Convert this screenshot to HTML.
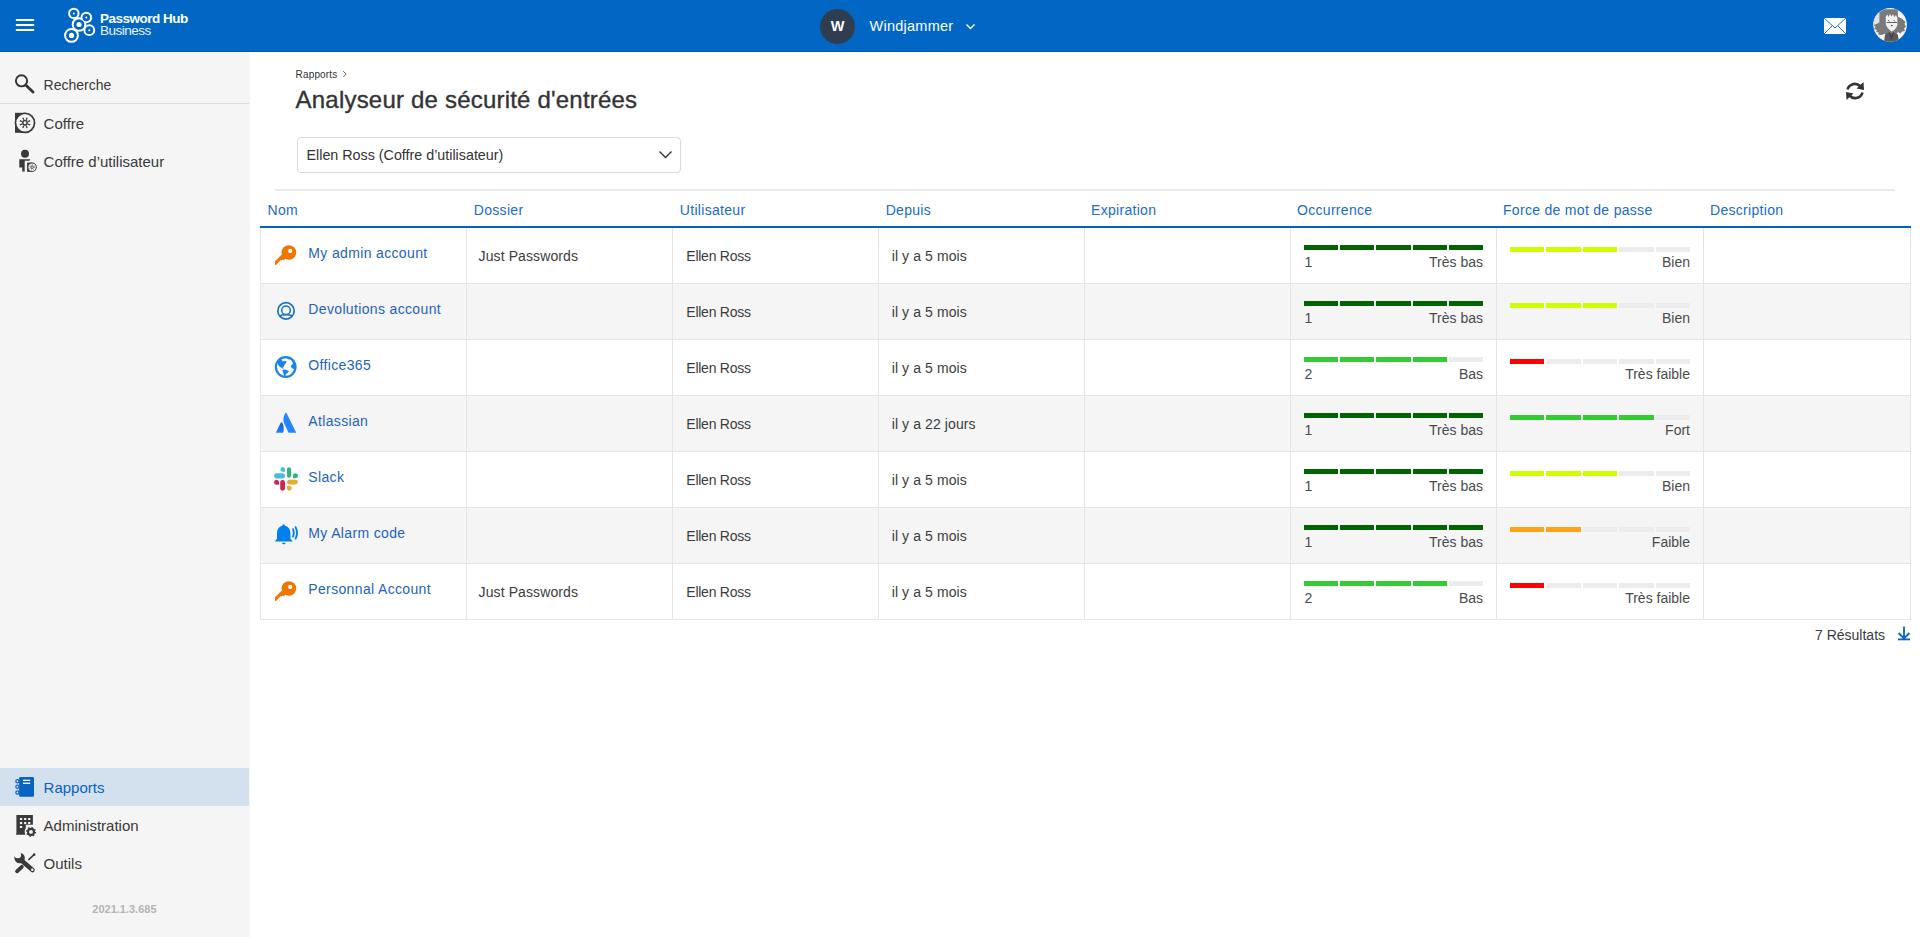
<!DOCTYPE html><html><head><meta charset="utf-8"><title>Analyseur de sécurité d'entrées</title><style>html,body{margin:0;padding:0;width:1920px;height:937px;overflow:hidden;background:#fff;font-family:"Liberation Sans",sans-serif;}body{position:relative;}</style></head><body>
<div style="position:absolute;left:0px;top:0px;width:1920px;height:52px;background:#0267c4;"></div>
<div style="position:absolute;left:0px;top:51px;width:1920px;height:1px;background:#005ab8;"></div>
<svg style="position:absolute;left:10px;top:14px" width="30" height="22" viewBox="0 0 30 22"><g stroke="#fff" stroke-width="2" stroke-linecap="round"><line x1="6.7" y1="6" x2="23.4" y2="6"/><line x1="6.7" y1="11" x2="23.4" y2="11"/><line x1="6.7" y1="16" x2="23.4" y2="16"/></g></svg>
<svg style="position:absolute;left:60px;top:0px" width="40" height="52" viewBox="0 0 40 52"><circle cx="13.849999999999994" cy="13.4" r="5.7" fill="#fff"/><circle cx="26.299999999999997" cy="17.5" r="5.8" fill="#fff"/><circle cx="19" cy="24.5" r="7.3" fill="#fff"/><circle cx="29.299999999999997" cy="30.2" r="5.9" fill="#fff"/><circle cx="11.5" cy="35.4" r="7.4" fill="#fff"/><circle cx="13.849999999999994" cy="13.4" r="3.7" fill="#0267c4"/><circle cx="26.299999999999997" cy="17.5" r="3.8" fill="#0267c4"/><circle cx="19" cy="24.5" r="5.3" fill="#0267c4"/><circle cx="29.299999999999997" cy="30.2" r="3.9000000000000004" fill="#0267c4"/><circle cx="11.5" cy="35.4" r="5.4" fill="#0267c4"/><circle cx="13.849999999999994" cy="13.4" r="1.0" fill="#fff"/><circle cx="26.299999999999997" cy="17.5" r="1.0" fill="#fff"/><circle cx="19" cy="24.5" r="2.6" fill="#fff"/><circle cx="29.299999999999997" cy="30.2" r="1.0" fill="#fff"/><circle cx="11.5" cy="35.4" r="2.6" fill="#fff"/></svg>
<div style="position:absolute;left:100.00px;top:11.97px;font-size:13.5px;line-height:13.5px;color:#fff;font-weight:700;white-space:nowrap;letter-spacing:-0.5px;">Password Hub</div>
<div style="position:absolute;left:100.00px;top:23.97px;font-size:13.5px;line-height:13.5px;color:#fff;font-weight:400;white-space:nowrap;letter-spacing:-0.5px;opacity:.92;">Business</div>
<div style="position:absolute;left:820px;top:9px;width:35px;height:35px;border-radius:50%;background:#2e3e50;"></div>
<div style="position:absolute;left:637.50px;width:400px;text-align:center;top:18.83px;font-size:14.5px;line-height:14.5px;color:#fff;font-weight:700;white-space:nowrap;">W</div>
<div style="position:absolute;left:869.50px;top:18.83px;font-size:14.5px;line-height:14.5px;color:#fff;font-weight:400;white-space:nowrap;letter-spacing:0.25px;">Windjammer</div>
<svg style="position:absolute;left:964px;top:21px" width="13" height="10" viewBox="0 0 13 10"><path d="M2.5 3.5 L6.5 7.5 L10.5 3.5" stroke="#fff" stroke-width="1.4" fill="none"/></svg>
<svg style="position:absolute;left:1824px;top:18px" width="22" height="16" viewBox="0 0 22 16"><rect x="0" y="0" width="22" height="16" fill="#fff" shape-rendering="crispEdges"/><path d="M0 0 L11 10 L22 0 M0 16 L8 8 M22 16 L14 8" stroke="#0267c4" stroke-width="0.9" fill="none"/></svg>
<svg style="position:absolute;left:1873px;top:8px" width="34" height="34" viewBox="0 0 34 34"><defs><clipPath id="av"><circle cx="17.1" cy="16.9" r="16.8"/></clipPath></defs>
<g clip-path="url(#av)"><rect width="34" height="34" fill="#f5f5f5"/><rect x="0" y="0" width="9" height="18" fill="#e2e2e2"/>
<path d="M10.7 1.3 L24.8 1.3 L25 9 C27 9.5 30 11 32.5 14 L31.5 16 L33 18.5 L31 20.5 L32 23 L29 23.5 L27.5 25.5 L25 24 L23.5 26 L11 26 C9 27 6.5 27.5 5 26 L6 24.5 L3 24 L4 22 L1 21 L2.5 19 L0.8 17 L4.5 15.5 L6.4 14.5 L6.4 4 Z" fill="#7a7a7a"/>
<path d="M12.8 8.5 L14.5 6.5 L15.5 9 L17 6 L18.5 8.5 L20 6.2 L21.5 9 L23 7 L24.4 10 L24.4 17 C23.5 20 21 23 18.4 23.5 C16 22 13.5 19 12.8 16 Z" fill="#f2f2f2"/>
<path d="M13.5 14.5 L24 14.5 M15 12 L16.5 13.5 M20.5 12 L22 13.5" stroke="#555" stroke-width="0.9" fill="none"/>
<ellipse cx="18.8" cy="17.6" rx="1" ry="0.6" fill="#333"/>
<path d="M11 34 L12 26.5 L16 24.5 L18.4 25.5 L21 24.5 L24.8 26.5 L26 34 Z" fill="#5a5a5a"/>
<path d="M16.5 24.5 L18.4 31 L20.5 24.5" stroke="#333" stroke-width="0.8" fill="none"/>
</g></svg>
<div style="position:absolute;left:0px;top:52px;width:250px;height:885px;background:#f5f5f5;"></div>
<div style="position:absolute;left:0px;top:103px;width:249px;height:1px;background:#dcdcdc;"></div>
<svg style="position:absolute;left:12px;top:71px" width="26" height="26" viewBox="0 0 26 26"><circle cx="9.5" cy="9.8" r="5.6" stroke="#333" stroke-width="1.9" fill="none"/><path d="M14.2 14.5 L21 21" stroke="#333" stroke-width="2.8" stroke-linecap="round"/></svg>
<div style="position:absolute;left:43.60px;top:77.95px;font-size:14px;line-height:14px;color:#3a3a3a;font-weight:400;white-space:nowrap;">Recherche</div>
<svg style="position:absolute;left:12px;top:110px" width="26" height="26" viewBox="0 0 26 26"><rect x="3" y="2.8" width="10" height="20" fill="#3a3a3a"/><circle cx="13" cy="12.8" r="10.4" fill="#3a3a3a"/><circle cx="13" cy="12.8" r="8.7" fill="#f5f5f5"/><circle cx="13" cy="12.8" r="2.2" stroke="#3a3a3a" stroke-width="1.5" fill="none"/><g stroke="#3a3a3a" stroke-width="1.3"><line x1="16.05" y1="14.06" x2="18.17" y2="14.94"/><line x1="14.26" y1="15.85" x2="15.14" y2="17.97"/><line x1="11.74" y1="15.85" x2="10.86" y2="17.97"/><line x1="9.95" y1="14.06" x2="7.83" y2="14.94"/><line x1="9.95" y1="11.54" x2="7.83" y2="10.66"/><line x1="11.74" y1="9.75" x2="10.86" y2="7.63"/><line x1="14.26" y1="9.75" x2="15.14" y2="7.63"/><line x1="16.05" y1="11.54" x2="18.17" y2="10.66"/></g></svg>
<div style="position:absolute;left:43.60px;top:116.05px;font-size:15px;line-height:15px;color:#3a3a3a;font-weight:400;white-space:nowrap;">Coffre</div>
<svg style="position:absolute;left:12px;top:146px" width="28" height="28" viewBox="0 0 28 28"><circle cx="13" cy="7.7" r="4" fill="#3a3a3a"/><path d="M7.3 13.2 L18.2 13.2 L17.6 14.8 L12.7 14.8 L12.7 25.6 L10.2 25.6 L10.2 21.5 L7.3 21.5 Z" fill="#3a3a3a"/><rect x="15.1" y="16.6" width="5" height="9.2" fill="#3a3a3a"/><circle cx="20.1" cy="21.2" r="4.7" fill="#3a3a3a"/><circle cx="20.1" cy="21.2" r="3.7" fill="#f5f5f5"/><circle cx="20.1" cy="21.2" r="1.3" stroke="#3a3a3a" stroke-width="0.9" fill="none"/><circle cx="20.1" cy="21.2" r="2.5" stroke="#3a3a3a" stroke-width="0.7" stroke-dasharray="0.7 1.26" fill="none"/></svg>
<div style="position:absolute;left:43.60px;top:154.30px;font-size:15px;line-height:15px;color:#3a3a3a;font-weight:400;white-space:nowrap;">Coffre d’utilisateur</div>
<div style="position:absolute;left:0px;top:768px;width:249px;height:38px;background:#d3e0ee;"></div>
<svg style="position:absolute;left:12px;top:772px" width="26" height="28" viewBox="0 0 26 28"><rect x="7.1" y="5" width="14.9" height="19.8" rx="1.2" fill="#0a62c2"/><rect x="11" y="7.7" width="7.2" height="1.3" fill="#fff"/><rect x="11" y="10.6" width="7.2" height="1.3" fill="#fff"/><g stroke="#0a62c2" stroke-width="1.2" fill="none"><circle cx="5.4" cy="9.3" r="1.6"/><circle cx="5.4" cy="14.7" r="1.6"/><circle cx="5.4" cy="20.5" r="1.6"/></g></svg>
<div style="position:absolute;left:43.60px;top:780.10px;font-size:15px;line-height:15px;color:#0a62c2;font-weight:400;white-space:nowrap;">Rapports</div>
<svg style="position:absolute;left:12px;top:810px" width="28" height="28" viewBox="0 0 28 28"><path d="M4.4 5 L20.9 5 L20.9 14.7 L13.8 14.7 L13.8 24.7 L4.1 24.7 L4.1 23.5 L4.4 23.5 Z" fill="#3a3a3a"/><g fill="#f5f5f5"><rect x="7.9" y="8" width="2.3" height="2"/><rect x="12.1" y="8" width="2.2" height="2"/><rect x="16.1" y="8" width="2.2" height="2"/><rect x="7.9" y="12" width="2.3" height="2.1"/><rect x="12.1" y="12" width="2.2" height="2.1"/><rect x="16.1" y="12" width="2.2" height="2.1"/><rect x="7.9" y="16" width="2.3" height="2"/><circle cx="19" cy="21.9" r="6.3"/></g><circle cx="19" cy="21.9" r="3" stroke="#3a3a3a" stroke-width="2.1" fill="none"/><circle cx="19" cy="21.9" r="4.4" stroke="#3a3a3a" stroke-width="1.4" stroke-dasharray="1.4 2.05" fill="none"/></svg>
<div style="position:absolute;left:43.60px;top:818.30px;font-size:15px;line-height:15px;color:#3a3a3a;font-weight:400;white-space:nowrap;">Administration</div>
<svg style="position:absolute;left:12px;top:848px" width="28" height="28" viewBox="0 0 28 28"><path d="M5 23.3 L9.8 18.8" stroke="#3a3a3a" stroke-width="3.8" stroke-linecap="round"/><path d="M16.8 11.6 L21.8 6.9" stroke="#3a3a3a" stroke-width="1.5" stroke-linecap="round"/><circle cx="22.2" cy="6.6" r="1.3" fill="#3a3a3a"/><path d="M9.5 12.5 L20.5 22" stroke="#3a3a3a" stroke-width="4.6" stroke-linecap="round"/><circle cx="7.6" cy="10" r="5.2" fill="#3a3a3a"/><circle cx="5.8" cy="7" r="3.3" fill="#f5f5f5"/><path d="M2.8 4.5 L8.5 4 L4 9.5 Z" fill="#f5f5f5"/><circle cx="20.3" cy="21.8" r="1.3" fill="#f5f5f5"/></svg>
<div style="position:absolute;left:43.60px;top:856.00px;font-size:15px;line-height:15px;color:#3a3a3a;font-weight:400;white-space:nowrap;">Outils</div>
<div style="position:absolute;left:-75.60px;width:400px;text-align:center;top:904.44px;font-size:11px;line-height:11px;color:#b4b4b4;font-weight:700;white-space:nowrap;">2021.1.3.685</div>
<div style="position:absolute;left:295.60px;top:70.44px;font-size:10px;line-height:10px;color:#333;font-weight:400;white-space:nowrap;letter-spacing:0.15px;">Rapports</div>
<svg style="position:absolute;left:341px;top:70px" width="7" height="9" viewBox="0 0 7 9"><path d="M2.3 1.2 L5.2 4.1 L2.3 7" stroke="#444" stroke-width="0.9" fill="none"/></svg>
<div style="position:absolute;left:295.60px;top:87.98px;font-size:24px;line-height:24px;color:#333;font-weight:400;white-space:nowrap;letter-spacing:0.2px;-webkit-text-stroke:0.35px #333;">Analyseur de sécurité d'entrées</div>
<svg style="position:absolute;left:1844px;top:80px" width="22" height="22" viewBox="0 0 22 22"><path d="M3.5 9.5 A7.5 7.5 0 0 1 16 6" stroke="#333" stroke-width="2.6" fill="none"/><path d="M19.5 2 L20 10 L12.5 8.5 Z" fill="#333"/><path d="M18.5 12.5 A7.5 7.5 0 0 1 6 16" stroke="#333" stroke-width="2.6" fill="none"/><path d="M2.5 20 L2 12 L9.5 13.5 Z" fill="#333"/></svg>
<div style="position:absolute;left:297px;top:137px;width:382px;height:34px;border:1px solid #d9d9d9;border-radius:4px;background:#fff;"></div>
<div style="position:absolute;left:306.50px;top:148.30px;font-size:14.3px;line-height:14.3px;color:#333;font-weight:400;white-space:nowrap;">Ellen Ross (Coffre d’utilisateur)</div>
<svg style="position:absolute;left:656px;top:147px" width="18" height="14" viewBox="0 0 18 14"><path d="M3.5 4.6 L9.5 10.6 L15.5 4.6" stroke="#333" stroke-width="1.35" fill="none"/></svg>
<div style="position:absolute;left:275px;top:189px;width:1620px;height:2px;background:#ebebeb;"></div>
<div style="position:absolute;left:267.60px;top:203.15px;font-size:14px;line-height:14px;color:#1a6bc6;font-weight:400;white-space:nowrap;letter-spacing:0.3px;">Nom</div>
<div style="position:absolute;left:473.80px;top:203.15px;font-size:14px;line-height:14px;color:#1a6bc6;font-weight:400;white-space:nowrap;letter-spacing:0.3px;">Dossier</div>
<div style="position:absolute;left:679.80px;top:203.15px;font-size:14px;line-height:14px;color:#1a6bc6;font-weight:400;white-space:nowrap;letter-spacing:0.3px;">Utilisateur</div>
<div style="position:absolute;left:885.70px;top:203.15px;font-size:14px;line-height:14px;color:#1a6bc6;font-weight:400;white-space:nowrap;letter-spacing:0.3px;">Depuis</div>
<div style="position:absolute;left:1091.00px;top:203.15px;font-size:14px;line-height:14px;color:#1a6bc6;font-weight:400;white-space:nowrap;letter-spacing:0.3px;">Expiration</div>
<div style="position:absolute;left:1297.00px;top:203.15px;font-size:14px;line-height:14px;color:#1a6bc6;font-weight:400;white-space:nowrap;letter-spacing:0.3px;">Occurrence</div>
<div style="position:absolute;left:1503.00px;top:203.15px;font-size:14px;line-height:14px;color:#1a6bc6;font-weight:400;white-space:nowrap;letter-spacing:0.3px;">Force de mot de passe</div>
<div style="position:absolute;left:1710.00px;top:203.15px;font-size:14px;line-height:14px;color:#1a6bc6;font-weight:400;white-space:nowrap;letter-spacing:0.3px;">Description</div>
<div style="position:absolute;left:260px;top:226px;width:1651px;height:2px;background:#0061c2;"></div>
<div style="position:absolute;left:260px;top:228px;width:1651px;height:55px;background:#ffffff;"></div>
<div style="position:absolute;left:260px;top:283px;width:1651px;height:1px;background:#e5e5e5;"></div>
<svg style="position:absolute;left:270px;top:240px" width="30" height="30" viewBox="0 0 30 30"><circle cx="18.9" cy="12.5" r="7.3" fill="#ee7700"/><path d="M12.8 13.5 L17 17.8 L13.5 20.2 L12.5 19.6 L11.6 20.6 L10.6 20 L7.2 23.8 L6 25 L5 24.9 L4.9 21.5 Z" fill="#ee7700"/><circle cx="20.2" cy="10.9" r="2.1" fill="#ffffff"/></svg>
<div style="position:absolute;left:308.30px;top:246.15px;font-size:14px;line-height:14px;color:#1f63bb;font-weight:400;white-space:nowrap;letter-spacing:0.35px;">My admin account</div>
<div style="position:absolute;left:478.60px;top:248.75px;font-size:14px;line-height:14px;color:#3c3c3c;font-weight:400;white-space:nowrap;letter-spacing:0.1px;">Just Passwords</div>
<div style="position:absolute;left:686.30px;top:248.75px;font-size:14px;line-height:14px;color:#3c3c3c;font-weight:400;white-space:nowrap;letter-spacing:-0.25px;">Ellen Ross</div>
<div style="position:absolute;left:891.70px;top:248.75px;font-size:14px;line-height:14px;color:#3c3c3c;font-weight:400;white-space:nowrap;letter-spacing:0.1px;">il y a 5 mois</div>
<div style="position:absolute;left:1304px;top:245px;width:34px;height:5px;background:#006400;"></div>
<div style="position:absolute;left:1340px;top:245px;width:34px;height:5px;background:#006400;"></div>
<div style="position:absolute;left:1376px;top:245px;width:35px;height:5px;background:#006400;"></div>
<div style="position:absolute;left:1413px;top:245px;width:34px;height:5px;background:#006400;"></div>
<div style="position:absolute;left:1449px;top:245px;width:34px;height:5px;background:#006400;"></div>
<div style="position:absolute;left:1304.50px;top:255.15px;font-size:14px;line-height:14px;color:#4a4a4a;font-weight:400;white-space:nowrap;">1</div>
<div style="position:absolute;right:437.00px;top:255.15px;font-size:14px;line-height:14px;color:#4a4a4a;font-weight:400;white-space:nowrap;">Très bas</div>
<div style="position:absolute;left:1510px;top:247px;width:34px;height:5px;background:#ccff00;"></div>
<div style="position:absolute;left:1546px;top:247px;width:35px;height:5px;background:#ccff00;"></div>
<div style="position:absolute;left:1583px;top:247px;width:34px;height:5px;background:#ccff00;"></div>
<div style="position:absolute;left:1619px;top:247px;width:35px;height:5px;background:#ececec;"></div>
<div style="position:absolute;left:1656px;top:247px;width:34px;height:5px;background:#ececec;"></div>
<div style="position:absolute;right:230.00px;top:255.15px;font-size:14px;line-height:14px;color:#4a4a4a;font-weight:400;white-space:nowrap;">Bien</div>
<div style="position:absolute;left:260px;top:284px;width:1651px;height:55px;background:#f5f5f5;"></div>
<div style="position:absolute;left:260px;top:339px;width:1651px;height:1px;background:#e5e5e5;"></div>
<svg style="position:absolute;left:270px;top:296px" width="30" height="30" viewBox="0 0 30 30"><circle cx="16" cy="14.9" r="8.2" stroke="#1a73c8" stroke-width="1.7" fill="none"/><circle cx="16" cy="14.2" r="4.3" stroke="#1a73c8" stroke-width="1.5" fill="none"/><path d="M9.6 20 C12 18.3 20 18.3 22.4 20" stroke="#1a73c8" stroke-width="1.6" fill="none"/></svg>
<div style="position:absolute;left:308.30px;top:302.15px;font-size:14px;line-height:14px;color:#1f63bb;font-weight:400;white-space:nowrap;letter-spacing:0.35px;">Devolutions account</div>
<div style="position:absolute;left:686.30px;top:304.75px;font-size:14px;line-height:14px;color:#3c3c3c;font-weight:400;white-space:nowrap;letter-spacing:-0.25px;">Ellen Ross</div>
<div style="position:absolute;left:891.70px;top:304.75px;font-size:14px;line-height:14px;color:#3c3c3c;font-weight:400;white-space:nowrap;letter-spacing:0.1px;">il y a 5 mois</div>
<div style="position:absolute;left:1304px;top:301px;width:34px;height:5px;background:#006400;"></div>
<div style="position:absolute;left:1340px;top:301px;width:34px;height:5px;background:#006400;"></div>
<div style="position:absolute;left:1376px;top:301px;width:35px;height:5px;background:#006400;"></div>
<div style="position:absolute;left:1413px;top:301px;width:34px;height:5px;background:#006400;"></div>
<div style="position:absolute;left:1449px;top:301px;width:34px;height:5px;background:#006400;"></div>
<div style="position:absolute;left:1304.50px;top:311.15px;font-size:14px;line-height:14px;color:#4a4a4a;font-weight:400;white-space:nowrap;">1</div>
<div style="position:absolute;right:437.00px;top:311.15px;font-size:14px;line-height:14px;color:#4a4a4a;font-weight:400;white-space:nowrap;">Très bas</div>
<div style="position:absolute;left:1510px;top:303px;width:34px;height:5px;background:#ccff00;"></div>
<div style="position:absolute;left:1546px;top:303px;width:35px;height:5px;background:#ccff00;"></div>
<div style="position:absolute;left:1583px;top:303px;width:34px;height:5px;background:#ccff00;"></div>
<div style="position:absolute;left:1619px;top:303px;width:35px;height:5px;background:#ececec;"></div>
<div style="position:absolute;left:1656px;top:303px;width:34px;height:5px;background:#ececec;"></div>
<div style="position:absolute;right:230.00px;top:311.15px;font-size:14px;line-height:14px;color:#4a4a4a;font-weight:400;white-space:nowrap;">Bien</div>
<div style="position:absolute;left:260px;top:340px;width:1651px;height:55px;background:#ffffff;"></div>
<div style="position:absolute;left:260px;top:395px;width:1651px;height:1px;background:#e5e5e5;"></div>
<svg style="position:absolute;left:270px;top:352px" width="30" height="30" viewBox="0 0 30 30"><circle cx="15.7" cy="15" r="9.8" stroke="#1a84ea" stroke-width="2.2" fill="#ffffff"/><path d="M7.5 10.5 L8.5 8 L11 6.8 L12.5 8.8 L12 9.6 L14.5 9 L16.8 9.5 L15.5 11.5 L14.2 13.5 L13.5 15.3 L12 15.5 L14.5 16.2 L12.5 16.5 L10.5 15.2 L8.5 13.5 L7.8 11.5 Z" fill="#1a84ea"/><path d="M12.8 17.8 L15.5 17.6 L19 19.2 L17.5 21 L16.2 22 L15 24.5 L14 24.5 L13.6 21.5 L12.6 19.5 Z" fill="#1a84ea"/><path d="M16.5 5.8 L18.5 7.5 L20.2 7 L22.5 9.5 L23 11.5 L21 13.5 L21.3 15.5 L23.5 17 L25.8 18.5 L25.5 12 L24 8 L20 5.5 Z" fill="#1a84ea"/></svg>
<div style="position:absolute;left:308.30px;top:358.15px;font-size:14px;line-height:14px;color:#1f63bb;font-weight:400;white-space:nowrap;letter-spacing:0.35px;">Office365</div>
<div style="position:absolute;left:686.30px;top:360.75px;font-size:14px;line-height:14px;color:#3c3c3c;font-weight:400;white-space:nowrap;letter-spacing:-0.25px;">Ellen Ross</div>
<div style="position:absolute;left:891.70px;top:360.75px;font-size:14px;line-height:14px;color:#3c3c3c;font-weight:400;white-space:nowrap;letter-spacing:0.1px;">il y a 5 mois</div>
<div style="position:absolute;left:1304px;top:357px;width:34px;height:5px;background:#33cc33;"></div>
<div style="position:absolute;left:1340px;top:357px;width:34px;height:5px;background:#33cc33;"></div>
<div style="position:absolute;left:1376px;top:357px;width:35px;height:5px;background:#33cc33;"></div>
<div style="position:absolute;left:1413px;top:357px;width:34px;height:5px;background:#33cc33;"></div>
<div style="position:absolute;left:1449px;top:357px;width:34px;height:5px;background:#ececec;"></div>
<div style="position:absolute;left:1304.50px;top:367.15px;font-size:14px;line-height:14px;color:#4a4a4a;font-weight:400;white-space:nowrap;">2</div>
<div style="position:absolute;right:437.00px;top:367.15px;font-size:14px;line-height:14px;color:#4a4a4a;font-weight:400;white-space:nowrap;">Bas</div>
<div style="position:absolute;left:1510px;top:359px;width:34px;height:5px;background:#ff0000;"></div>
<div style="position:absolute;left:1546px;top:359px;width:35px;height:5px;background:#ececec;"></div>
<div style="position:absolute;left:1583px;top:359px;width:34px;height:5px;background:#ececec;"></div>
<div style="position:absolute;left:1619px;top:359px;width:35px;height:5px;background:#ececec;"></div>
<div style="position:absolute;left:1656px;top:359px;width:34px;height:5px;background:#ececec;"></div>
<div style="position:absolute;right:230.00px;top:367.15px;font-size:14px;line-height:14px;color:#4a4a4a;font-weight:400;white-space:nowrap;">Très faible</div>
<div style="position:absolute;left:260px;top:396px;width:1651px;height:55px;background:#f5f5f5;"></div>
<div style="position:absolute;left:260px;top:451px;width:1651px;height:1px;background:#e5e5e5;"></div>
<svg style="position:absolute;left:270px;top:408px" width="30" height="30" viewBox="0 0 30 30"><defs><linearGradient id="ag" x1="0.6" y1="0" x2="0.2" y2="1"><stop offset="0" stop-color="#0a5fd6"/><stop offset="1" stop-color="#2684ff"/></linearGradient></defs><path d="M5.8 24.7 L10.7 14.7 C11 14 11.8 14 12.2 14.7 C13.2 16.5 14.2 19.8 13.6 22.5 L13 24.7 Z" fill="url(#ag)"/><path d="M15.2 5.3 C15.5 4.6 16.3 4.6 16.6 5.3 L26.3 24.7 L18.6 24.7 L13.9 14.8 C12.9 11.8 13.3 8.5 15.2 5.3 Z" fill="#2684ff"/></svg>
<div style="position:absolute;left:308.30px;top:414.15px;font-size:14px;line-height:14px;color:#1f63bb;font-weight:400;white-space:nowrap;letter-spacing:0.35px;">Atlassian</div>
<div style="position:absolute;left:686.30px;top:416.75px;font-size:14px;line-height:14px;color:#3c3c3c;font-weight:400;white-space:nowrap;letter-spacing:-0.25px;">Ellen Ross</div>
<div style="position:absolute;left:891.70px;top:416.75px;font-size:14px;line-height:14px;color:#3c3c3c;font-weight:400;white-space:nowrap;letter-spacing:0.1px;">il y a 22 jours</div>
<div style="position:absolute;left:1304px;top:413px;width:34px;height:5px;background:#006400;"></div>
<div style="position:absolute;left:1340px;top:413px;width:34px;height:5px;background:#006400;"></div>
<div style="position:absolute;left:1376px;top:413px;width:35px;height:5px;background:#006400;"></div>
<div style="position:absolute;left:1413px;top:413px;width:34px;height:5px;background:#006400;"></div>
<div style="position:absolute;left:1449px;top:413px;width:34px;height:5px;background:#006400;"></div>
<div style="position:absolute;left:1304.50px;top:423.15px;font-size:14px;line-height:14px;color:#4a4a4a;font-weight:400;white-space:nowrap;">1</div>
<div style="position:absolute;right:437.00px;top:423.15px;font-size:14px;line-height:14px;color:#4a4a4a;font-weight:400;white-space:nowrap;">Très bas</div>
<div style="position:absolute;left:1510px;top:415px;width:34px;height:5px;background:#33cc33;"></div>
<div style="position:absolute;left:1546px;top:415px;width:35px;height:5px;background:#33cc33;"></div>
<div style="position:absolute;left:1583px;top:415px;width:34px;height:5px;background:#33cc33;"></div>
<div style="position:absolute;left:1619px;top:415px;width:35px;height:5px;background:#33cc33;"></div>
<div style="position:absolute;left:1656px;top:415px;width:34px;height:5px;background:#ececec;"></div>
<div style="position:absolute;right:230.00px;top:423.15px;font-size:14px;line-height:14px;color:#4a4a4a;font-weight:400;white-space:nowrap;">Fort</div>
<div style="position:absolute;left:260px;top:452px;width:1651px;height:55px;background:#ffffff;"></div>
<div style="position:absolute;left:260px;top:507px;width:1651px;height:1px;background:#e5e5e5;"></div>
<svg style="position:absolute;left:270px;top:464px" width="30" height="30" viewBox="0 0 30 30"><g stroke-linecap="round"><path d="M6.7 11.85 L12.5 11.85" stroke="#44bde0" stroke-width="5.1"/><path d="M19.05 5.3 L19.05 11.7" stroke="#2eb67d" stroke-width="4.1"/><path d="M19.4 18.1 L25.5 18.1" stroke="#e3ad36" stroke-width="4.8"/><path d="M12.6 18.4 L12.6 24.3" stroke="#d2224f" stroke-width="4.8"/></g><path d="M12.8 3 A2.4 2.4 0 0 0 12.8 7.8 L15 7.8 L15 5.2 A2.4 2.4 0 0 0 12.8 3 Z" fill="#44bde0"/><path d="M25.5 9.2 A2.5 2.5 0 0 1 25.5 14.2 L23 14.2 L23 11.7 A2.5 2.5 0 0 1 25.5 9.2 Z" fill="#2eb67d"/><path d="M6.6 15.8 A2.5 2.5 0 0 0 6.6 20.8 L9 20.8 L9 18.3 A2.5 2.5 0 0 0 6.6 15.8 Z" fill="#d2224f"/><path d="M17 21.8 L19 21.8 A2.5 2.5 0 0 1 19 26.8 A2.5 2.5 0 0 1 17 24.3 Z" fill="#e3ad36"/></svg>
<div style="position:absolute;left:308.30px;top:470.15px;font-size:14px;line-height:14px;color:#1f63bb;font-weight:400;white-space:nowrap;letter-spacing:0.35px;">Slack</div>
<div style="position:absolute;left:686.30px;top:472.75px;font-size:14px;line-height:14px;color:#3c3c3c;font-weight:400;white-space:nowrap;letter-spacing:-0.25px;">Ellen Ross</div>
<div style="position:absolute;left:891.70px;top:472.75px;font-size:14px;line-height:14px;color:#3c3c3c;font-weight:400;white-space:nowrap;letter-spacing:0.1px;">il y a 5 mois</div>
<div style="position:absolute;left:1304px;top:469px;width:34px;height:5px;background:#006400;"></div>
<div style="position:absolute;left:1340px;top:469px;width:34px;height:5px;background:#006400;"></div>
<div style="position:absolute;left:1376px;top:469px;width:35px;height:5px;background:#006400;"></div>
<div style="position:absolute;left:1413px;top:469px;width:34px;height:5px;background:#006400;"></div>
<div style="position:absolute;left:1449px;top:469px;width:34px;height:5px;background:#006400;"></div>
<div style="position:absolute;left:1304.50px;top:479.15px;font-size:14px;line-height:14px;color:#4a4a4a;font-weight:400;white-space:nowrap;">1</div>
<div style="position:absolute;right:437.00px;top:479.15px;font-size:14px;line-height:14px;color:#4a4a4a;font-weight:400;white-space:nowrap;">Très bas</div>
<div style="position:absolute;left:1510px;top:471px;width:34px;height:5px;background:#ccff00;"></div>
<div style="position:absolute;left:1546px;top:471px;width:35px;height:5px;background:#ccff00;"></div>
<div style="position:absolute;left:1583px;top:471px;width:34px;height:5px;background:#ccff00;"></div>
<div style="position:absolute;left:1619px;top:471px;width:35px;height:5px;background:#ececec;"></div>
<div style="position:absolute;left:1656px;top:471px;width:34px;height:5px;background:#ececec;"></div>
<div style="position:absolute;right:230.00px;top:479.15px;font-size:14px;line-height:14px;color:#4a4a4a;font-weight:400;white-space:nowrap;">Bien</div>
<div style="position:absolute;left:260px;top:508px;width:1651px;height:55px;background:#f5f5f5;"></div>
<div style="position:absolute;left:260px;top:563px;width:1651px;height:1px;background:#e5e5e5;"></div>
<svg style="position:absolute;left:270px;top:520px" width="30" height="30" viewBox="0 0 30 30"><path d="M13.7 4.2 C14.4 4.2 14.8 5 15.2 5.8 C18.6 6.8 20.4 9.5 20.4 13 L20.5 18.8 L22.9 21.6 L4.8 21.6 L7 18.8 L7 13 C7 9.5 8.8 6.8 12.2 5.8 C12.6 5 13 4.2 13.7 4.2 Z" fill="#0080ee"/><path d="M11.9 22.8 L15.7 22.8 C15.2 24.8 12.4 24.8 11.9 22.8 Z" fill="#0080ee"/><path d="M23.1 9.2 C24 11.5 24 14.5 23.1 16.6" stroke="#0080ee" stroke-width="1.9" fill="none" stroke-linecap="round"/><path d="M25.6 7.2 C27.2 10.5 27.2 15.5 25.6 18.6" stroke="#0080ee" stroke-width="1.9" fill="none" stroke-linecap="round"/></svg>
<div style="position:absolute;left:308.30px;top:526.15px;font-size:14px;line-height:14px;color:#1f63bb;font-weight:400;white-space:nowrap;letter-spacing:0.35px;">My Alarm code</div>
<div style="position:absolute;left:686.30px;top:528.75px;font-size:14px;line-height:14px;color:#3c3c3c;font-weight:400;white-space:nowrap;letter-spacing:-0.25px;">Ellen Ross</div>
<div style="position:absolute;left:891.70px;top:528.75px;font-size:14px;line-height:14px;color:#3c3c3c;font-weight:400;white-space:nowrap;letter-spacing:0.1px;">il y a 5 mois</div>
<div style="position:absolute;left:1304px;top:525px;width:34px;height:5px;background:#006400;"></div>
<div style="position:absolute;left:1340px;top:525px;width:34px;height:5px;background:#006400;"></div>
<div style="position:absolute;left:1376px;top:525px;width:35px;height:5px;background:#006400;"></div>
<div style="position:absolute;left:1413px;top:525px;width:34px;height:5px;background:#006400;"></div>
<div style="position:absolute;left:1449px;top:525px;width:34px;height:5px;background:#006400;"></div>
<div style="position:absolute;left:1304.50px;top:535.15px;font-size:14px;line-height:14px;color:#4a4a4a;font-weight:400;white-space:nowrap;">1</div>
<div style="position:absolute;right:437.00px;top:535.15px;font-size:14px;line-height:14px;color:#4a4a4a;font-weight:400;white-space:nowrap;">Très bas</div>
<div style="position:absolute;left:1510px;top:527px;width:34px;height:5px;background:#ffa31a;"></div>
<div style="position:absolute;left:1546px;top:527px;width:35px;height:5px;background:#ffa31a;"></div>
<div style="position:absolute;left:1583px;top:527px;width:34px;height:5px;background:#ececec;"></div>
<div style="position:absolute;left:1619px;top:527px;width:35px;height:5px;background:#ececec;"></div>
<div style="position:absolute;left:1656px;top:527px;width:34px;height:5px;background:#ececec;"></div>
<div style="position:absolute;right:230.00px;top:535.15px;font-size:14px;line-height:14px;color:#4a4a4a;font-weight:400;white-space:nowrap;">Faible</div>
<div style="position:absolute;left:260px;top:564px;width:1651px;height:55px;background:#ffffff;"></div>
<div style="position:absolute;left:260px;top:619px;width:1651px;height:1px;background:#e5e5e5;"></div>
<svg style="position:absolute;left:270px;top:576px" width="30" height="30" viewBox="0 0 30 30"><circle cx="18.9" cy="12.5" r="7.3" fill="#ee7700"/><path d="M12.8 13.5 L17 17.8 L13.5 20.2 L12.5 19.6 L11.6 20.6 L10.6 20 L7.2 23.8 L6 25 L5 24.9 L4.9 21.5 Z" fill="#ee7700"/><circle cx="20.2" cy="10.9" r="2.1" fill="#ffffff"/></svg>
<div style="position:absolute;left:308.30px;top:582.15px;font-size:14px;line-height:14px;color:#1f63bb;font-weight:400;white-space:nowrap;letter-spacing:0.35px;">Personnal Account</div>
<div style="position:absolute;left:478.60px;top:584.75px;font-size:14px;line-height:14px;color:#3c3c3c;font-weight:400;white-space:nowrap;letter-spacing:0.1px;">Just Passwords</div>
<div style="position:absolute;left:686.30px;top:584.75px;font-size:14px;line-height:14px;color:#3c3c3c;font-weight:400;white-space:nowrap;letter-spacing:-0.25px;">Ellen Ross</div>
<div style="position:absolute;left:891.70px;top:584.75px;font-size:14px;line-height:14px;color:#3c3c3c;font-weight:400;white-space:nowrap;letter-spacing:0.1px;">il y a 5 mois</div>
<div style="position:absolute;left:1304px;top:581px;width:34px;height:5px;background:#33cc33;"></div>
<div style="position:absolute;left:1340px;top:581px;width:34px;height:5px;background:#33cc33;"></div>
<div style="position:absolute;left:1376px;top:581px;width:35px;height:5px;background:#33cc33;"></div>
<div style="position:absolute;left:1413px;top:581px;width:34px;height:5px;background:#33cc33;"></div>
<div style="position:absolute;left:1449px;top:581px;width:34px;height:5px;background:#ececec;"></div>
<div style="position:absolute;left:1304.50px;top:591.15px;font-size:14px;line-height:14px;color:#4a4a4a;font-weight:400;white-space:nowrap;">2</div>
<div style="position:absolute;right:437.00px;top:591.15px;font-size:14px;line-height:14px;color:#4a4a4a;font-weight:400;white-space:nowrap;">Bas</div>
<div style="position:absolute;left:1510px;top:583px;width:34px;height:5px;background:#ff0000;"></div>
<div style="position:absolute;left:1546px;top:583px;width:35px;height:5px;background:#ececec;"></div>
<div style="position:absolute;left:1583px;top:583px;width:34px;height:5px;background:#ececec;"></div>
<div style="position:absolute;left:1619px;top:583px;width:35px;height:5px;background:#ececec;"></div>
<div style="position:absolute;left:1656px;top:583px;width:34px;height:5px;background:#ececec;"></div>
<div style="position:absolute;right:230.00px;top:591.15px;font-size:14px;line-height:14px;color:#4a4a4a;font-weight:400;white-space:nowrap;">Très faible</div>
<div style="position:absolute;left:260px;top:228px;width:1px;height:392px;background:#e5e5e5;"></div>
<div style="position:absolute;left:466px;top:228px;width:1px;height:392px;background:#e5e5e5;"></div>
<div style="position:absolute;left:672px;top:228px;width:1px;height:392px;background:#e5e5e5;"></div>
<div style="position:absolute;left:878px;top:228px;width:1px;height:392px;background:#e5e5e5;"></div>
<div style="position:absolute;left:1084px;top:228px;width:1px;height:392px;background:#e5e5e5;"></div>
<div style="position:absolute;left:1290px;top:228px;width:1px;height:392px;background:#e5e5e5;"></div>
<div style="position:absolute;left:1496px;top:228px;width:1px;height:392px;background:#e5e5e5;"></div>
<div style="position:absolute;left:1703px;top:228px;width:1px;height:392px;background:#e5e5e5;"></div>
<div style="position:absolute;left:1910px;top:228px;width:1px;height:392px;background:#e5e5e5;"></div>
<div style="position:absolute;left:1815.00px;top:628.15px;font-size:14px;line-height:14px;color:#3c3c3c;font-weight:400;white-space:nowrap;">7 Résultats</div>
<svg style="position:absolute;left:1896px;top:625px" width="16" height="16" viewBox="0 0 16 16"><path d="M8 1.5 L8 13.5" stroke="#0a62c2" stroke-width="1.8"/><path d="M2.5 8 L8 13.5 L13.5 8" stroke="#0a62c2" stroke-width="1.8" fill="none"/><rect x="2" y="13.5" width="12" height="1.8" fill="#0a62c2"/></svg>
</body></html>
